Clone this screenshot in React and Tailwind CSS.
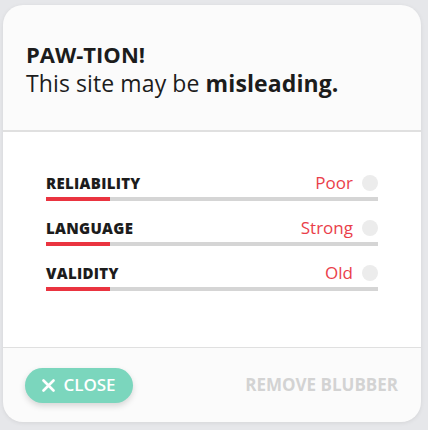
export default function App() {
  const rows = [
    { label: "RELIABILITY", value: "Poor" },
    { label: "LANGUAGE", value: "Strong" },
    { label: "VALIDITY", value: "Old" },
  ];

  return (
    <div
      className="w-[428px] h-[430px] bg-[#e6e7ea] pt-[5px] pl-[3px] pr-[7px] pb-[8px]"
      style={{ fontFamily: "'Open Sans', 'Noto Sans', sans-serif" }}
    >
      <div className="h-full flex flex-col rounded-[20px] overflow-hidden bg-[#fbfbfb] shadow-[0_1px_4px_rgba(0,0,0,0.08)]">
        {/* header */}
        <div className="h-[125px] px-[23px] pt-[35px] text-[#1c1c1c]">
          <h1 className="text-[22px] leading-[29px] font-bold">PAW-TION!</h1>
          <p className="text-[23px] leading-[29px] tracking-[0.1px]">
            This site may be <span className="font-bold">misleading.</span>
          </p>
        </div>

        {/* ratings */}
        <div className="flex-1 bg-white border-t-2 border-b border-[#e0e0e0] px-[43px] pt-[41px] flex flex-col gap-[17px]">
          {rows.map((r) => (
            <div key={r.label}>
              <div className="flex items-center h-[20px]">
                <span className="text-[15px] font-extrabold tracking-[0.3px] text-[#1c1c1c]">{r.label}</span>
                <span className="ml-auto text-[17px] text-[#ea3e4a]">{r.value}</span>
                <span className="ml-[9px] w-[16px] h-[16px] rounded-full bg-[#ececec]" />
              </div>
              <div className="mt-[4px] h-[4px] bg-[#d5d5d5] flex">
                <div className="w-[64px] h-full bg-[#ea3440]" />
              </div>
            </div>
          ))}
        </div>

        {/* footer */}
        <div className="h-[74px] flex items-center justify-between pl-[22px] pr-[23px]">
          <button className="h-[35px] w-[108px] rounded-full bg-[#7bd6bd] text-white flex items-center justify-center gap-[8px] text-[17px] font-semibold shadow-[0_3px_6px_rgba(0,0,0,0.15)]">
            <svg width="13" height="13" viewBox="0 0 13 13">
              <path d="M1.5 1.5 L11.5 11.5 M11.5 1.5 L1.5 11.5" stroke="white" strokeWidth="2.6" strokeLinecap="round" />
            </svg>
            CLOSE
          </button>
          <span className="text-[17px] font-bold text-[#d3d3d3]">REMOVE BLUBBER</span>
        </div>
      </div>
    </div>
  );
}
